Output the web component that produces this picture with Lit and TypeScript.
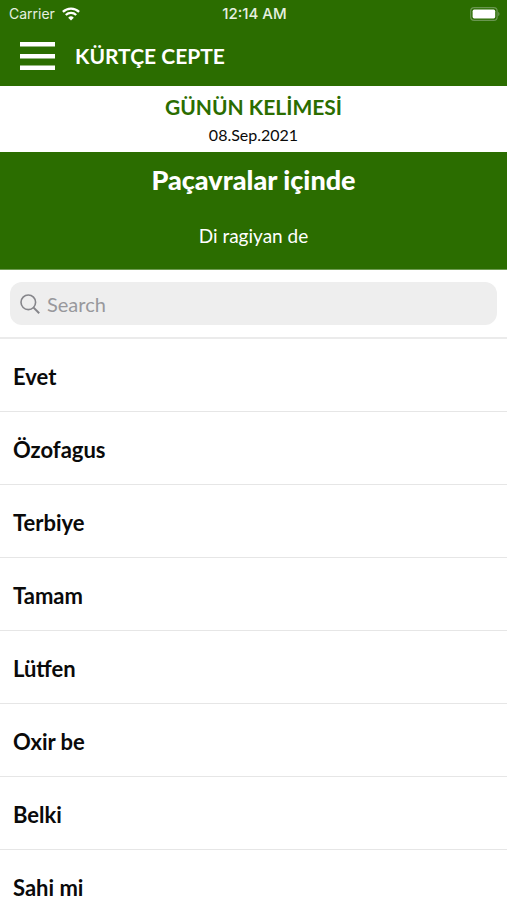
import { LitElement, html, css } from "lit";
import { customElement, state } from "lit/decorators.js";

@customElement("app-root")
export class AppRoot extends LitElement {
  @state() private query = "";

  private words = ["Evet", "Özofagus", "Terbiye", "Tamam", "Lütfen", "Oxir be", "Belki", "Sahi mi"];

  static styles = css`
    :host {
      display: flex;
      flex-direction: column;
      height: 100vh;
      overflow: hidden;
      background: #fff;
      color: #0a0a0a;
      font-family: "Gill Sans", Lato, sans-serif;
    }
    * { box-sizing: border-box; }
    h1, h2, h3, p, ul { margin: 0; padding: 0; font-size: inherit; }
    .top, .card { background: #2b6d00; color: #fff; flex: none; }
    .status {
      display: grid;
      grid-template-columns: 1fr auto 1fr;
      align-items: center;
      height: 28px;
      padding: 0 7px 0 9px;
      font: 14px/28px Inter, sans-serif;
    }
    .carrier { display: flex; align-items: center; gap: 7px; color: #e6f0e0; }
    .time { font-size: 15px; font-weight: 500; color: #e6f0e0; }
    .battery { justify-self: end; display: block; }
    .nav { display: flex; align-items: center; gap: 20px; height: 58px; padding: 0 20px 2px; }
    .menu { display: block; padding: 0; border: 0; background: none; color: #fff; cursor: pointer; }
    .menu svg { display: block; }
    .title { font-size: 21px; line-height: 28px; font-weight: 700; }
    .day { flex: none; height: 66px; padding-top: 7px; text-align: center; }
    .day h2 { font-size: 21px; line-height: 28px; font-weight: 700; color: #2b6d00; }
    .day p { font-size: 16px; line-height: 28px; }
    .card {
      display: flex;
      flex-direction: column;
      align-items: center;
      gap: 28px;
      height: 118px;
      padding-top: 14px;
      text-align: center;
      border-bottom: 1px solid #6f9c52;
    }
    .card h3 { font-size: 27px; line-height: 28px; font-weight: 900; }
    .card p { font-size: 19px; line-height: 28px; }
    .search { flex: none; padding: 12px 10px; border-bottom: 2px solid #ebebeb; }
    .field {
      display: flex;
      align-items: center;
      gap: 7px;
      height: 43px;
      padding: 0 10px;
      border-radius: 12px;
      background: #eee;
      color: #85858a;
    }
    .field svg { flex: none; }
    .field input {
      flex: 1;
      min-width: 0;
      padding: 0;
      border: 0;
      outline: 0;
      background: none;
      color: #111;
      font: 20px/28px "Gill Sans", Lato, sans-serif;
      appearance: none;
    }
    .field input::placeholder { color: #98989c; opacity: 1; }
    .list { flex: 1; min-height: 0; overflow-y: auto; scrollbar-width: none; list-style: none; }
    .row {
      display: flex;
      align-items: center;
      width: 100%;
      height: 73px;
      padding: 3px 13px 0;
      border: 0;
      border-bottom: 1px solid #e6e6e6;
      background: none;
      color: inherit;
      font: 700 22px/28px "Gill Sans", Lato, sans-serif;
      text-align: left;
      cursor: pointer;
    }
  `;

  render() {
    const q = this.query.toLocaleLowerCase("tr");
    const shown = this.words.filter((w) => w.toLocaleLowerCase("tr").includes(q));
    return html`
      <header class="top">
        <div class="status">
          <span class="carrier">Carrier
            <svg width="18" height="14" viewBox="0 0 18 14" fill="none" stroke="#fff" stroke-width="2.3" aria-hidden="true">
              <path d="M.9 4.9a11.6 11.6 0 0 1 16.2 0M3.8 8a7.5 7.5 0 0 1 10.4 0" />
              <path d="M9 13.6 6.2 10.7a4 4 0 0 1 5.6 0z" fill="#fff" stroke="none" />
            </svg>
          </span>
          <span class="time">12:14 AM</span>
          <svg class="battery" width="30" height="14" viewBox="0 0 30 14" aria-label="Battery full" role="img">
            <rect x=".7" y=".7" width="26.4" height="12.6" rx="3.4" fill="none" stroke="#6a9650" stroke-width="1.2" />
            <rect x="2.6" y="2.6" width="22.6" height="8.8" rx="1.6" fill="#fff" />
            <path d="M28.2 4.8c1.8.8 1.8 3.6 0 4.4z" fill="#6a9650" />
          </svg>
        </div>
        <nav class="nav">
          <button class="menu" aria-label="Menu">
            <svg width="35" height="28" viewBox="0 0 35 28" fill="currentColor" aria-hidden="true">
              <path d="M0 0h35v4.5H0zM0 12h35v4.5H0zM0 23.5h35V28H0z" />
            </svg>
          </button>
          <h1 class="title">KÜRTÇE CEPTE</h1>
        </nav>
      </header>
      <section class="day">
        <h2>GÜNÜN KELİMESİ</h2>
        <p>08.Sep.2021</p>
      </section>
      <section class="card">
        <h3>Paçavralar içinde</h3>
        <p>Di ragiyan de</p>
      </section>
      <div class="search">
        <label class="field">
          <svg width="20" height="20" viewBox="0 0 20 20" fill="none" stroke="currentColor" stroke-width="1.6" aria-hidden="true">
            <circle cx="8.3" cy="8.3" r="7.3" />
            <path d="m13.6 13.6 5.6 5.6" stroke-width="2" />
          </svg>
          <input type="search" placeholder="Search" aria-label="Search" .value=${this.query}
            @input=${(e: Event) => (this.query = (e.target as HTMLInputElement).value)} />
        </label>
      </div>
      <ul class="list">
        ${shown.map((w) => html`<li><button class="row">${w}</button></li>`)}
      </ul>
    `;
  }
}
